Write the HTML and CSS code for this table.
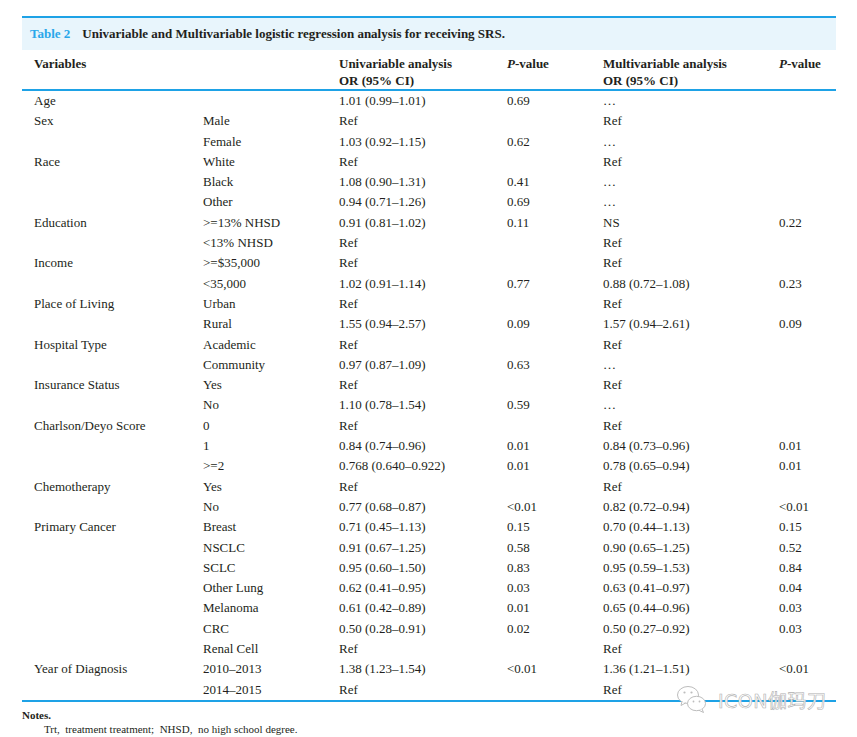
FILE: index.html
```html
<!DOCTYPE html>
<html lang="en">
<head>
<meta charset="utf-8">
<title>Table 2</title>
<link rel="stylesheet" href="styles.css">
</head>
<body>
<div class="page">
  <div class="tbl">
    <div class="cap"><span class="cap-label">Table 2</span><span class="cap-title">Univariable and Multivariable logistic regression analysis for receiving SRS.</span></div>
    <table>
      <colgroup>
        <col class="c1"><col class="c2"><col class="c3"><col class="c4"><col class="c5"><col class="c6">
      </colgroup>
      <thead>
        <tr>
          <th>Variables</th>
          <th></th>
          <th>Univariable analysis<br>OR (95% CI)</th>
          <th><i>P</i>-value</th>
          <th>Multivariable analysis<br>OR (95% CI)</th>
          <th><i>P</i>-value</th>
        </tr>
      </thead>
      <tbody>
        <tr><td>Age</td><td></td><td>1.01 (0.99–1.01)</td><td>0.69</td><td>…</td><td></td></tr>
        <tr><td>Sex</td><td>Male</td><td>Ref</td><td></td><td>Ref</td><td></td></tr>
        <tr><td></td><td>Female</td><td>1.03 (0.92–1.15)</td><td>0.62</td><td>…</td><td></td></tr>
        <tr><td>Race</td><td>White</td><td>Ref</td><td></td><td>Ref</td><td></td></tr>
        <tr><td></td><td>Black</td><td>1.08 (0.90–1.31)</td><td>0.41</td><td>…</td><td></td></tr>
        <tr><td></td><td>Other</td><td>0.94 (0.71–1.26)</td><td>0.69</td><td>…</td><td></td></tr>
        <tr><td>Education</td><td>&gt;=13% NHSD</td><td>0.91 (0.81–1.02)</td><td>0.11</td><td>NS</td><td>0.22</td></tr>
        <tr><td></td><td>&lt;13% NHSD</td><td>Ref</td><td></td><td>Ref</td><td></td></tr>
        <tr><td>Income</td><td>&gt;=$35,000</td><td>Ref</td><td></td><td>Ref</td><td></td></tr>
        <tr><td></td><td>&lt;35,000</td><td>1.02 (0.91–1.14)</td><td>0.77</td><td>0.88 (0.72–1.08)</td><td>0.23</td></tr>
        <tr><td>Place of Living</td><td>Urban</td><td>Ref</td><td></td><td>Ref</td><td></td></tr>
        <tr><td></td><td>Rural</td><td>1.55 (0.94–2.57)</td><td>0.09</td><td>1.57 (0.94–2.61)</td><td>0.09</td></tr>
        <tr><td>Hospital Type</td><td>Academic</td><td>Ref</td><td></td><td>Ref</td><td></td></tr>
        <tr><td></td><td>Community</td><td>0.97 (0.87–1.09)</td><td>0.63</td><td>…</td><td></td></tr>
        <tr><td>Insurance Status</td><td>Yes</td><td>Ref</td><td></td><td>Ref</td><td></td></tr>
        <tr><td></td><td>No</td><td>1.10 (0.78–1.54)</td><td>0.59</td><td>…</td><td></td></tr>
        <tr><td>Charlson/Deyo Score</td><td>0</td><td>Ref</td><td></td><td>Ref</td><td></td></tr>
        <tr><td></td><td>1</td><td>0.84 (0.74–0.96)</td><td>0.01</td><td>0.84 (0.73–0.96)</td><td>0.01</td></tr>
        <tr><td></td><td>&gt;=2</td><td>0.768 (0.640–0.922)</td><td>0.01</td><td>0.78 (0.65–0.94)</td><td>0.01</td></tr>
        <tr><td>Chemotherapy</td><td>Yes</td><td>Ref</td><td></td><td>Ref</td><td></td></tr>
        <tr><td></td><td>No</td><td>0.77 (0.68–0.87)</td><td>&lt;0.01</td><td>0.82 (0.72–0.94)</td><td>&lt;0.01</td></tr>
        <tr><td>Primary Cancer</td><td>Breast</td><td>0.71 (0.45–1.13)</td><td>0.15</td><td>0.70 (0.44–1.13)</td><td>0.15</td></tr>
        <tr><td></td><td>NSCLC</td><td>0.91 (0.67–1.25)</td><td>0.58</td><td>0.90 (0.65–1.25)</td><td>0.52</td></tr>
        <tr><td></td><td>SCLC</td><td>0.95 (0.60–1.50)</td><td>0.83</td><td>0.95 (0.59–1.53)</td><td>0.84</td></tr>
        <tr><td></td><td>Other Lung</td><td>0.62 (0.41–0.95)</td><td>0.03</td><td>0.63 (0.41–0.97)</td><td>0.04</td></tr>
        <tr><td></td><td>Melanoma</td><td>0.61 (0.42–0.89)</td><td>0.01</td><td>0.65 (0.44–0.96)</td><td>0.03</td></tr>
        <tr><td></td><td>CRC</td><td>0.50 (0.28–0.91)</td><td>0.02</td><td>0.50 (0.27–0.92)</td><td>0.03</td></tr>
        <tr><td></td><td>Renal Cell</td><td>Ref</td><td></td><td>Ref</td><td></td></tr>
        <tr><td>Year of Diagnosis</td><td>2010–2013</td><td>1.38 (1.23–1.54)</td><td>&lt;0.01</td><td>1.36 (1.21–1.51)</td><td>&lt;0.01</td></tr>
        <tr><td></td><td>2014–2015</td><td>Ref</td><td></td><td>Ref</td><td></td></tr>
      </tbody>
    </table>
    <div class="watermark">
      <svg class="wm-icon" viewBox="0 0 32 30" width="32" height="30">
        <ellipse cx="12" cy="11" rx="10.5" ry="8.5" fill="#fff" stroke="#bdbdbd" stroke-width="1"/>
        <path d="M6 17.5 L5 21.5 L9.5 19" fill="#fff" stroke="#bdbdbd" stroke-width="1" stroke-linejoin="round"/>
        <circle cx="8.5" cy="8.5" r="1.1" fill="#bdbdbd"/>
        <circle cx="15.5" cy="8.5" r="1.1" fill="#bdbdbd"/>
        <ellipse cx="20.5" cy="19.5" rx="9" ry="7.2" fill="#fff" stroke="#bdbdbd" stroke-width="1"/>
        <path d="M26 25 L27.5 28.5 L23 26.3" fill="#fff" stroke="#bdbdbd" stroke-width="1" stroke-linejoin="round"/>
        <circle cx="17.5" cy="17.5" r="0.9" fill="#bdbdbd"/>
        <circle cx="23.5" cy="17.5" r="0.9" fill="#bdbdbd"/>
      </svg>
      <span class="wm-text">ICON伽玛刀</span>
    </div>
  </div>
  <div class="notes">
    <div class="notes-title">Notes.</div>
    <div class="notes-body">Trt,&nbsp; treatment treatment;&nbsp; NHSD,&nbsp; no high school degree.</div>
  </div>
</div>
</body>
</html>
```
FILE: styles.css
```css
html, body {
  margin: 0;
  padding: 0;
  background: #fff;
}
body {
  font-family: "Liberation Serif", "Times New Roman", serif;
  color: #231f20;
}
.page {
  padding: 16px 21px 0 22px;
}
.tbl {
  position: relative;
  width: 814px;
  border-top: 2px solid #1ea2e6;
}
.cap {
  display: flex;
  align-items: center;
  height: 32px;
  padding-left: 8px;
  background: #e8f5fc;
  font-weight: bold;
  font-size: 13px;
}
.cap-label {
  color: #2aa7ea;
  margin-right: 12px;
}
table {
  width: 814px;
  table-layout: fixed;
  border-collapse: collapse;
  font-size: 13px;
}
col.c1 { width: 169px; }
col.c2 { width: 136px; }
col.c3 { width: 168px; }
col.c4 { width: 96px; }
col.c5 { width: 176px; }
col.c6 { width: 69px; }
th {
  text-align: left;
  vertical-align: top;
  font-weight: bold;
  line-height: 17px;
  padding: 5px 0 0 12px;
  height: 34px;
  border-bottom: 2px solid #1ea2e6;
}
td {
  padding: 0 0 0 12px;
  height: 20.3px;
  line-height: 20.3px;
  white-space: nowrap;
}
tbody tr:last-child td {
  border-bottom: 2px solid #1ea2e6;
}
.watermark {
  position: absolute;
  left: 654px;
  top: 666px;
  display: flex;
  align-items: center;
  gap: 10px;
}
.wm-icon {
  display: block;
}
.wm-text {
  font-family: "DejaVu Sans", "Noto Sans CJK SC", sans-serif;
  font-size: 19px;
  font-weight: normal;
  color: #fff;
  -webkit-text-stroke: 0.6px #b0b0b0;
  letter-spacing: 0.5px;
}
.notes {
  margin-top: 6px;
  font-size: 11px;
  line-height: 14px;
}
.notes-title {
  font-weight: bold;
}
.notes-body {
  padding-left: 22px;
}
```
